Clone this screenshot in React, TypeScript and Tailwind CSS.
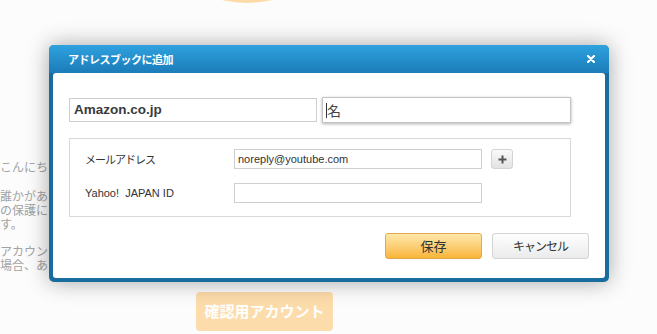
const jp = "font-['Noto_Sans_CJK_JP',sans-serif]";
const latin = "font-['Liberation_Sans','Noto_Sans_CJK_JP',sans-serif]";

function Background() {
  return (
    <div className="flex flex-col">
      <div className="ml-[142px] -mt-[207px] h-[210px] w-[210px] rounded-full bg-[#fddcaa]" />
      <div className={`mt-[157px] w-[56px] overflow-hidden text-[12px] leading-[14px] text-[#a3a3a3] whitespace-nowrap ${jp}`}>
        <p className="mb-[15px]">こんにちは</p>
        <p className="mb-[13px]">
          誰かがあな
          <br />
          の保護に
          <br />
          す。
        </p>
        <p>
          アカウント
          <br />
          場合、あ
        </p>
      </div>
      <div className="ml-[196px] mt-[20px] flex h-[39px] w-[137px] items-center justify-center rounded-[4px] bg-[#fddcab]">
        <span className={`text-[15px] font-bold text-white ${jp}`}>確認用アカウント</span>
      </div>
    </div>
  );
}

function Dialog() {
  return (
    <div className="absolute left-[49px] top-[45px] flex h-[237px] w-[560px] flex-col rounded-[5px] bg-[#196c9e] shadow-[0_0_22px_rgba(0,0,0,0.35)]">
      <div className="flex h-[28px] items-center justify-between rounded-t-[5px] bg-gradient-to-b from-[#2ea2df] to-[#1b7cb9] pl-[19px] pr-[14px]">
        <span className={`text-[11px] font-bold text-white tracking-[-0.5px] ${jp}`}>アドレスブックに追加</span>
        <svg width="8" height="8" viewBox="0 0 8 8">
          <path d="M1 1L7 7M7 1L1 7" stroke="white" strokeWidth="2.2" strokeLinecap="round" />
        </svg>
      </div>
      <div className="mx-[4px] mb-[4px] flex flex-1 flex-col rounded-[3px] bg-white pl-[16px] pr-[34px] pt-[25px]">
        <div className="flex gap-[5px]">
          <div className="flex h-[24px] w-[248px] items-center border border-[#cfcfcf] px-[4px]">
            <span className={`text-[13.5px] font-bold text-[#3a3a3a] ${latin}`}>Amazon.co.jp</span>
          </div>
          <div className="flex h-[26px] -mt-[1px] w-[249px] items-center border border-[#c4c4c4] px-[3px] shadow-[0_1px_3px_rgba(0,0,0,0.3)]">
            <span className="h-[15px] w-[1px] bg-[#333]" />
            <span className={`text-[14px] text-[#444] ${jp}`}>名</span>
          </div>
        </div>

        <div className="mt-[15px] flex h-[79px] flex-col gap-[14px] border border-[#d9d9d9] pl-[15px] pt-[10px]">
          <div className="flex items-center">
            <span className={`w-[149px] text-[11px] text-[#333] tracking-[-1px] ${jp}`}>メールアドレス</span>
            <div className="flex h-[20px] w-[248px] items-center border border-[#cfcfcf] px-[3px]">
              <span className={`text-[11px] text-[#333] ${latin}`}>noreply@youtube.com</span>
            </div>
            <div className="ml-[9px] flex h-[20px] w-[22px] items-center justify-center rounded-[3px] border border-[#d3d3d3] bg-gradient-to-b from-[#fafafa] to-[#e3e3e3]">
              <svg width="9" height="9" viewBox="0 0 9 9">
                <path d="M4.5 0.5V8.5M0.5 4.5H8.5" stroke="#555" strokeWidth="2" />
              </svg>
            </div>
          </div>
          <div className="flex items-center">
            <span className={`w-[149px] text-[11px] text-[#333] whitespace-pre ${latin}`}>Yahoo!  JAPAN ID</span>
            <div className="h-[20px] w-[248px] border border-[#cfcfcf]" />
          </div>
        </div>

        <div className="mt-[16px] -mr-[18px] flex justify-end gap-[10px]">
          <button className="flex h-[26px] w-[97px] items-center justify-center rounded-[3px] border border-[#e2a94a] bg-gradient-to-b from-[#fde8a9] to-[#f8b534]">
            <span className={`text-[13px] text-[#333] ${jp}`}>保存</span>
          </button>
          <button className="flex h-[26px] w-[97px] items-center justify-center rounded-[3px] border border-[#d4d4d4] bg-gradient-to-b from-[#fefefe] to-[#ebebeb]">
            <span className={`text-[12px] text-[#333] tracking-[-1px] ${jp}`}>キャンセル</span>
          </button>
        </div>
      </div>
    </div>
  );
}

export default function App() {
  return (
    <div className="relative h-[334px] w-[657px] overflow-hidden bg-[#fcfcfc]">
      <Background />
      <Dialog />
    </div>
  );
}
